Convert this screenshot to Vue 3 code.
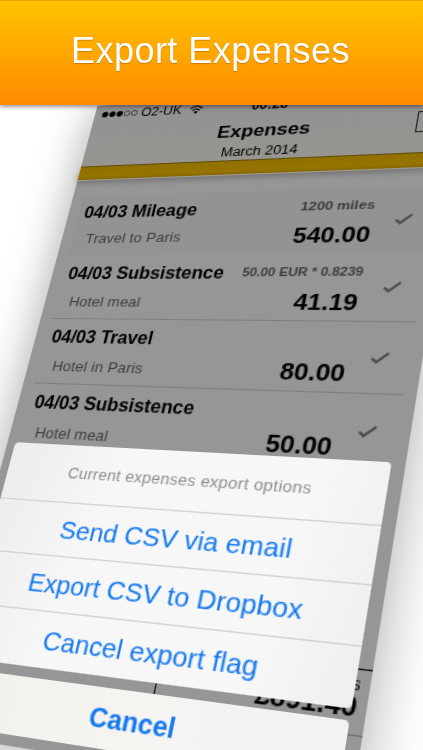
<template>
  <div class="page">
    <header class="banner">
      <h1 class="banner-title">Export Expenses</h1>
    </header>

    <div class="phone" :style="{ transform: phoneTransform }">
      <div class="status-bar">
        <span class="signal">
          <i v-for="n in 5" :key="n" class="signal-dot" :class="{ empty: n > 3 }"></i>
        </span>
        <span class="carrier">O2-UK</span>
        <svg class="wifi" viewBox="0 0 14 10">
          <path d="M1 3.6 Q7 -1.6 13 3.6" />
          <path d="M3.2 5.9 Q7 2.6 10.8 5.9" />
          <path class="wifi-dot" d="M4.9 7.6 Q7 5.8 9.1 7.6 L7 10 Z" />
        </svg>
        <span class="clock">00:28</span>
      </div>
      <div class="nav-bar">
        <div class="nav-title">Expenses</div>
        <div class="nav-month">March 2014</div>
        <span class="nav-button"></span>
      </div>
      <div class="accent"></div>

      <ul class="expenses">
        <li v-for="(item, i) in expenses" :key="i" class="expense">
          <div class="info">
            <div class="name">{{ item.name }}</div>
            <div class="note">{{ item.note }}</div>
          </div>
          <div class="value">
            <div class="detail" :class="{ long: item.detail.length > 12 }">{{ item.detail }}</div>
            <div class="amount">{{ item.amount }}</div>
          </div>
          <svg class="check" viewBox="0 0 14 10">
            <path d="M1 5.4 L4.6 8.6 L13 1" />
          </svg>
        </li>
      </ul>

      <div class="totals">
        <div class="total-cell"></div>
        <div class="total-cell">
          <div class="total-label">Expenses</div>
          <div class="total-amount">£891.40</div>
        </div>
      </div>
      <div class="tab-bar"></div>

      <div class="sheet">
        <div class="sheet-group">
          <div class="sheet-title">Current expenses export options</div>
          <button v-for="option in options" :key="option" class="sheet-btn">{{ option }}</button>
        </div>
        <button class="sheet-btn cancel">Cancel</button>
      </div>
    </div>
  </div>
</template>

<script setup>
const expenses = [
  { name: '04/03 Mileage', note: 'Travel to Paris', detail: '1200 miles', amount: '540.00' },
  { name: '04/03 Subsistence', note: 'Hotel meal', detail: '50.00 EUR * 0.8239', amount: '41.19' },
  { name: '04/03 Travel', note: 'Hotel in Paris', detail: '', amount: '80.00' },
  { name: '04/03 Subsistence', note: 'Hotel meal', detail: '', amount: '50.00' }
]

const options = ['Send CSV via email', 'Export CSV to Dropbox', 'Cancel export flag']

// Perspective of the phone: maps a w x h plane, starting at top, onto four corners
const plane = { w: 320, h: 444, top: 64 }
const corners = [[81.2, 166.6], [455.6, 150.6], [366.5, 710.8], [-49.6, 656.2]]

const projection = ({ w, h, top }, [a, b, c, d]) => {
  const [px, py] = [b[0] - c[0], b[1] - c[1]]
  const [qx, qy] = [d[0] - c[0], d[1] - c[1]]
  const [sx, sy] = [a[0] - b[0] + c[0] - d[0], a[1] - b[1] + c[1] - d[1]]
  const det = px * qy - qx * py
  const g = (sx * qy - qx * sy) / det
  const k = (px * sy - sx * py) / det
  const ux = [(b[0] - a[0] + g * b[0]) / w, (b[1] - a[1] + g * b[1]) / w, g / w]
  const uy = [(d[0] - a[0] + k * d[0]) / h, (d[1] - a[1] + k * d[1]) / h, k / h]
  const m = [ux[0], ux[1], 0, ux[2], uy[0], uy[1], 0, uy[2], 0, 0, 1, 0, a[0], a[1], 0, 1]
  return `matrix3d(${m.join(',')}) translateY(${-top}px)`
}

const phoneTransform = projection(plane, corners)
</script>

<style>
body {
  margin: 0;
  overflow: hidden;
}
</style>

<style scoped>
.page {
  position: relative;
  width: 423px;
  height: 750px;
  overflow: hidden;
  background: #fff;
  font-family: "Liberation Sans", Arial, sans-serif;
}

.banner {
  position: relative;
  z-index: 2;
  display: flex;
  align-items: center;
  justify-content: center;
  height: 105px;
  box-sizing: border-box;
  border-top: 1px solid #e3a808;
  background: linear-gradient(#ffc000, #ffbd00 12%, #ff8a00);
  box-shadow: 0 1px 5px rgba(0, 0, 0, 0.55);
}

.banner-title {
  margin: 0 2px 4px 0;
  font-size: 36px;
  font-weight: 400;
  letter-spacing: 0.45px;
  color: #fff;
  text-shadow: 0 1px 1px rgba(120, 60, 0, 0.4);
}

/* overlaps the banner and is tilted away as one flat plane */
.phone {
  position: absolute;
  top: 0;
  left: 0;
  display: flex;
  flex-direction: column;
  width: 320px;
  height: 568px;
  transform-origin: 0 0;
  background: #969696;
  box-shadow: 0 0 40px rgba(0, 0, 0, 0.34);
  color: #000;
}

.status-bar {
  position: relative;
  display: flex;
  align-items: center;
  height: 20px;
  padding-left: 7px;
  background: #939393;
  font-size: 12.3px;
}

.signal {
  display: flex;
  gap: 1.5px;
  margin-right: 4px;
}

.signal-dot {
  width: 5.5px;
  height: 5.5px;
  box-sizing: border-box;
  border: 0.7px solid #000;
  border-radius: 50%;
  background: #000;
}

.signal-dot.empty {
  border-color: #333;
  background: none;
}

.wifi {
  width: 13px;
  height: 9px;
  margin-left: 7px;
  fill: none;
  stroke: #000;
  stroke-width: 1.4;
}

.wifi-dot {
  fill: #000;
  stroke: none;
}

.clock {
  position: absolute;
  left: 2px;
  right: 0;
  text-align: center;
  font-weight: 700;
}

.nav-bar {
  position: relative;
  height: 44px;
  background: linear-gradient(#939393, #97958f);
  text-align: center;
}

.nav-title {
  padding-top: 4.5px;
  font-size: 17.2px;
  font-weight: 700;
  line-height: 20px;
}

.nav-month {
  padding-top: 1px;
  font-size: 12.5px;
  line-height: 20px;
}

.nav-button {
  position: absolute;
  top: 5px;
  left: 285.5px;
  width: 20px;
  height: 18px;
  border: 1px solid #222;
}

.accent {
  height: 15px;
  border-top: 1px solid #5e4c0a;
  border-bottom: 1px solid #a09d92;
  box-sizing: border-box;
  background: linear-gradient(#917000, #967400 75%, #846600);
  box-shadow: 0 2px 6px rgba(0, 0, 0, 0.28);
}

.expenses {
  margin: 16px 9px 0 10px;
  padding: 0;
  list-style: none;
}

.expense {
  display: flex;
  height: 60px;
  box-sizing: border-box;
  padding: 0 15px 0 5px;
  border-bottom: 1px solid #808083;
}

.expense:first-child {
  border-color: #969696;
  background: #939393;
}

.info {
  flex: 1;
  white-space: nowrap;
}

.name {
  padding-top: 7px;
  font-size: 15.9px;
  font-weight: 700;
  line-height: 20px;
}

.expense:first-child .name {
  padding: 6.5px 0 0.5px;
}

.note {
  padding: 6.5px 0 0 7.5px;
  font-size: 13.1px;
  letter-spacing: 0.15px;
  line-height: 20px;
  color: #3c3c3c;
}

.expense:first-child .note {
  padding-top: 5.5px;
}

.value {
  text-align: right;
  font-weight: 700;
  white-space: nowrap;
}

.detail {
  height: 20px;
  padding-top: 5.5px;
  font-size: 11.8px;
  line-height: 20px;
  color: #3c3c3c;
}

.detail.long {
  font-size: 10.9px;
}

.amount {
  padding-top: 5.5px;
  font-size: 20px;
  line-height: 24px;
}

.check {
  width: 14px;
  height: 10px;
  margin: 25px 0 0 17px;
  fill: none;
  stroke: #4a4a4a;
  stroke-width: 2;
}

.totals {
  display: flex;
  height: 45px;
  margin-top: auto;
  box-sizing: border-box;
  border-top: 1px solid #111;
}

.total-cell {
  flex: 1;
  padding-right: 6.5px;
  text-align: right;
}

.total-cell:first-child {
  flex: 0 0 162px;
  border-right: 1px solid #111;
}

.total-label {
  padding-top: 3px;
  font-size: 12px;
  line-height: 14px;
}

.total-amount {
  font-size: 19.6px;
  font-weight: 700;
  line-height: 17px;
}

.tab-bar {
  height: 43px;
  box-sizing: border-box;
  border-top: 1px solid #6e6e6e;
}

/* action sheet lies over the list */
.sheet {
  position: absolute;
  left: 7px;
  right: 10px;
  bottom: 8px;
  display: flex;
  flex-direction: column;
  gap: 8px;
}

.sheet-group {
  display: flex;
  flex-direction: column;
  border-radius: 4px;
  overflow: hidden;
  background: linear-gradient(100deg, #ececec, #f7f7f7 30%, #f7f7f7 75%, #efefef);
}

.sheet-title {
  height: 48px;
  padding-right: 1px;
  font-size: 13px;
  letter-spacing: 0.25px;
  line-height: 48px;
  text-align: center;
  color: #8c8c8c;
}

.sheet-btn {
  height: 44px;
  box-sizing: border-box;
  padding: 1px 2px 0 0;
  border: none;
  border-top: 1px solid #d0d0d2;
  background: none;
  font-family: inherit;
  font-size: 20.6px;
  letter-spacing: 0.05px;
  color: #1277ee;
}

.sheet-btn.cancel {
  border-top: none;
  border-radius: 4px;
  background: linear-gradient(90deg, #f1f0ea, #f5f4f1 50%, #f2f2f2);
  font-size: 20px;
  font-weight: 700;
}
</style>
